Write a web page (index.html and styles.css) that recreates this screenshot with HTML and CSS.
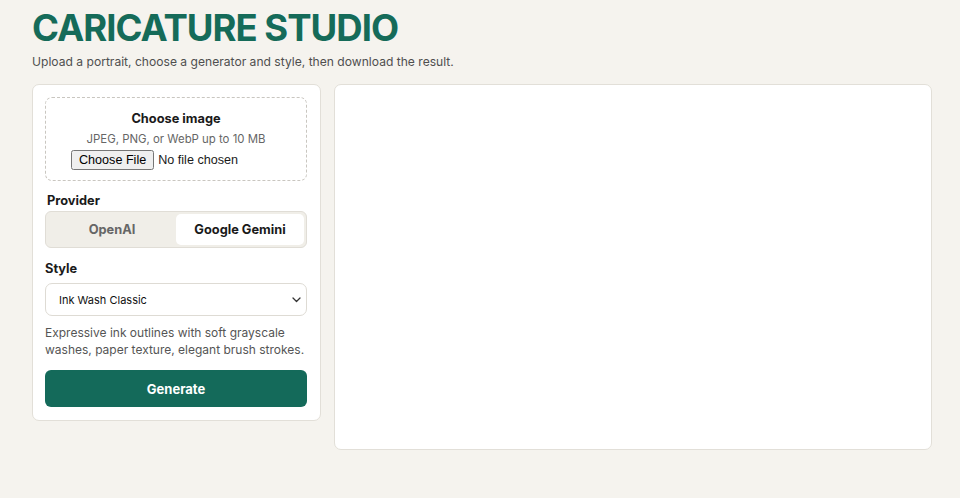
FILE: index.html
```html
<!DOCTYPE html>
<html>
<head>
<meta charset="utf-8">
<link rel="stylesheet" href="styles.css">
</head>
<body>
<main class="page">
  <h1 class="title">CARICATURE STUDIO</h1>
  <p class="subtitle">Upload a portrait, choose a generator and style, then download the result.</p>
  <div class="layout">
    <section class="panel">
      <div class="drop">
        <div class="drop-title">Choose image</div>
        <div class="drop-hint">JPEG, PNG, or WebP up to 10 MB</div>
        <input class="file" type="file">
      </div>
      <div class="label provider-label">Provider</div>
      <div class="segmented">
        <button class="seg">OpenAI</button>
        <button class="seg active">Google Gemini</button>
      </div>
      <div class="label style-label">Style</div>
      <div class="select-wrap">
        <select class="select">
          <option>Ink Wash Classic</option>
        </select>
        <svg class="chevron" width="9" height="6" viewBox="0 0 9 6"><path d="M1 1l3.5 3.5L8 1" fill="none" stroke="#333" stroke-width="1.3" stroke-linecap="round" stroke-linejoin="round"/></svg>
      </div>
      <p class="desc">Expressive ink outlines with soft grayscale washes, paper texture, elegant brush strokes.</p>
      <button class="generate">Generate</button>
    </section>
    <section class="preview"></section>
  </div>
</main>
</body>
</html>
```
FILE: styles.css
```css
* { box-sizing: border-box; }
html, body { margin: 0; padding: 0; }
body {
  background: #f5f3ee;
  font-family: Inter, "Noto Sans", sans-serif;
  color: #1a1a1a;
}
.page { padding: 8px 28px 0 32px; }
.title {
  margin: 0;
  font-size: 36.5px;
  line-height: 40px;
  font-weight: 700;
  color: #156b59;
  letter-spacing: -1px;
}
.subtitle {
  margin: 5px 0 0;
  font-size: 12.1px;
  line-height: 18px;
  color: #4f4f4f;
}
.layout {
  display: flex;
  gap: 13px;
  margin-top: 13px;
  align-items: flex-start;
}
.panel {
  width: 289px;
  flex: none;
  background: #fff;
  border: 1px solid #e2dfd8;
  border-radius: 7px;
  padding: 12px 13px 13px 12px;
}
.drop {
  border: 1px dashed #c9c6c0;
  border-radius: 7px;
  height: 84px;
  padding-top: 12px;
  display: flex;
  flex-direction: column;
  align-items: center;
}
.drop-title { font-size: 12.8px; font-weight: 700; line-height: 18px; }
.drop-hint { font-size: 11.4px; color: #666; line-height: 16px; margin-top: 3px; }
.file {
  margin-top: 3px;
  width: 210px;
  font-family: "Liberation Sans", Arial, sans-serif;
  font-size: 12.6px;
}
.label { font-size: 12.8px; font-weight: 700; line-height: 18px; }
.provider-label { margin: 11px 0 0 2px; }
.segmented {
  margin-top: 1px;
  display: flex;
  background: #f0eee8;
  border: 1px solid #e0ddd6;
  border-radius: 6px;
  padding: 2px;
  height: 37px;
}
.seg {
  flex: 1;
  border: 0;
  background: transparent;
  font-family: inherit;
  font-size: 12.8px;
  font-weight: 700;
  color: #666;
  border-radius: 5px;
}
.seg.active {
  background: #fff;
  color: #1a1a1a;
}
.style-label { margin-top: 12px; }
.select-wrap {
  position: relative;
  margin-top: 5px;
}
.select {
  display: block;
  width: 100%;
  height: 33px;
  border: 1px solid #dedbd4;
  border-radius: 7px;
  background: #fff;
  font-family: Inter, sans-serif;
  font-size: 11px;
  padding: 0 13px;
  color: #111;
  appearance: none;
  -webkit-appearance: none;
}
.chevron {
  position: absolute;
  right: 6px;
  top: 14px;
  pointer-events: none;
}
.desc {
  margin: 8px 0 0;
  font-size: 12px;
  line-height: 17px;
  color: #555;
}
.generate {
  margin-top: 12px;
  width: 100%;
  height: 37px;
  border: 0;
  border-radius: 6px;
  background: #146a5a;
  color: #fff;
  font-family: inherit;
  font-size: 13px;
  font-weight: 700;
}
.preview {
  flex: 1;
  height: 366px;
  background: #fff;
  border: 1px solid #e2dfd8;
  border-radius: 7px;
}
```
